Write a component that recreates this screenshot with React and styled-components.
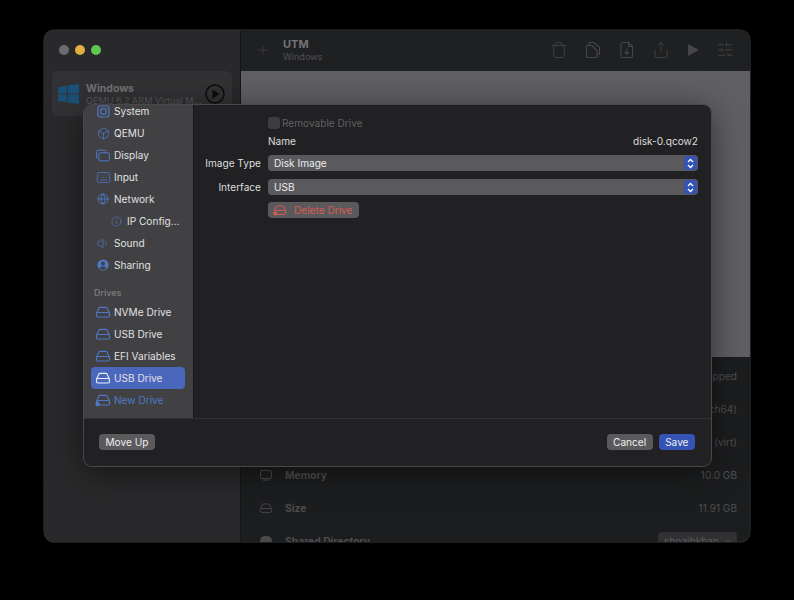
import styled, { createGlobalStyle } from 'styled-components'
import { Box, Keyboard, Globe, Info, Volume1, Plus, Trash, Share, SlidersHorizontal, ChevronDown } from 'lucide-react'

const GlobalStyle = createGlobalStyle`
  html, body {
    margin: 0;
    background: #000;
    font-family: Inter, "Liberation Sans", sans-serif;
    -webkit-font-smoothing: antialiased;
  }
`

const Page = styled.div`
  width: 794px;
  height: 600px;
  padding: 30px 44px 58px;
  box-sizing: border-box;
  overflow: hidden;
`

const Window = styled.div`
  position: relative;
  display: flex;
  width: 706px;
  height: 512px;
  border-radius: 10px;
  overflow: hidden;
  background: #1c1d1e;
  box-shadow: 0 0 0 0.5px #3c3c3e;
`

const Sidebar = styled.div`
  flex: 0 0 197px;
  display: flex;
  flex-direction: column;
  background: #29292b;
  border-right: 1px solid #161617;
  box-sizing: border-box;
  padding: 0 8px;
`

const Lights = styled.div`
  display: flex;
  gap: 6px;
  height: 41px;
  align-items: center;
  padding: 0 0 1px 7px;
  box-sizing: border-box;
`

const Light = styled.span`
  width: 10px;
  height: 10px;
  border-radius: 50%;
  background: ${p => p.$color};
`

const VmCard = styled.div`
  display: flex;
  align-items: center;
  width: 180px;
  height: 45px;
  padding: 0 7px 0 6px;
  box-sizing: border-box;
  gap: 7px;
  border-radius: 5px;
  background: #323234;
`

const VmText = styled.div`
  flex: 1;
  min-width: 0;
  margin-top: 1px;
`

const VmName = styled.div`
  font-size: 10.5px;
  font-weight: 700;
  line-height: 13px;
  color: #737375;
`

const VmSub = styled.div`
  font-size: 9.1px;
  line-height: 12px;
  color: #58585a;
  white-space: nowrap;
`

const PlayCircle = styled.svg`
  flex: none;
`

const Main = styled.div`
  flex: 1;
  display: flex;
  flex-direction: column;
  min-width: 0;
`

const Toolbar = styled.div`
  flex: 0 0 41px;
  display: flex;
  align-items: center;
  background: #1f2021;
  padding: 0 16px 1px 15px;
  box-sizing: border-box;
  color: #464648;
`

const TitleBlock = styled.div`
  margin-left: 13px;
  flex: 1;
`

const Title = styled.div`
  font-size: 11px;
  font-weight: 700;
  line-height: 13px;
  color: #737375;
`

const Subtitle = styled.div`
  font-size: 9px;
  line-height: 11px;
  color: #515153;
`

const ToolIcons = styled.div`
  display: flex;
  align-items: center;
  gap: 16px;
`

const Preview = styled.div`
  flex: 0 0 286px;
  background: #5f5f64;
`

const Details = styled.div`
  flex: 1;
  padding: 2px 13px 0 18px;
  overflow: hidden;
`

const DetailRow = styled.div`
  display: flex;
  align-items: center;
  height: 33px;
  flex: none;
`

const DetailIcon = styled.span`
  display: flex;
  width: 26px;
  color: #4a4a4c;
`

const DetailLabel = styled.span`
  flex: 1;
  font-size: 10.3px;
  font-weight: 700;
  color: #4d4d4f;
`

const DetailValue = styled.span`
  font-size: 10.1px;
  color: #4f4f51;
`

const SharePopup = styled.span`
  display: flex;
  align-items: center;
  justify-content: space-between;
  width: 79px;
  height: 18px;
  padding: 0 4px 0 6px;
  box-sizing: border-box;
  border-radius: 4px;
  background: #313133;
  font-size: 10.1px;
  color: #5c5c5e;
`

const Dialog = styled.div`
  position: absolute;
  left: 40px;
  top: 75px;
  width: 627px;
  height: 361px;
  display: flex;
  flex-direction: column;
  background: #212123;
  border-radius: 8px;
  overflow: hidden;
  box-shadow: 0 0 0 1px #48484a, 0 6px 34px rgba(0, 0, 0, 0.5);
`

const DialogBody = styled.div`
  flex: 0 0 314px;
  display: flex;
  border-bottom: 1px solid #313133;
  box-sizing: border-box;
`

const SideList = styled.div`
  flex: 0 0 110px;
  background: #414143;
  border-right: 1px solid #161617;
  box-sizing: border-box;
  padding: 0 8px 0 7px;
  overflow: hidden;
`

const ListScroll = styled.div`
  margin-top: -5px;
`

const SideItem = styled.div`
  display: flex;
  align-items: center;
  gap: 3px;
  height: 22px;
  padding-left: ${p => (p.$indent ? 17 : 4)}px;
  border-radius: 4px;
  font-size: 10.1px;
  white-space: nowrap;
  color: ${p => (p.$link ? '#4f78c8' : '#e0e0e2')};
  background: ${p => (p.$active ? '#4b67bd' : 'transparent')};
`

const IconSlot = styled.span`
  flex: none;
  display: flex;
  align-items: center;
  justify-content: center;
  width: 16px;
  color: ${p => (p.$active ? '#eef0f6' : '#4f78c8')};
`

const SectionHead = styled.div`
  font-size: 8.8px;
  font-weight: 600;
  line-height: 12px;
  color: #77777a;
  padding: 11px 0 2px 3px;
`

const Form = styled.div`
  flex: 1;
  display: grid;
  grid-template-columns: 55px 1fr;
  column-gap: 7px;
  align-content: start;
  padding: 0 13px 0 12px;
  font-size: 10.1px;
  color: #dcdcde;
`

const FieldLabel = styled.div`
  margin-top: ${p => p.$top}px;
  height: 16px;
  line-height: 17px;
  text-align: right;
  white-space: nowrap;
  justify-self: end;
`

const FieldValue = styled.div`
  grid-column: 2;
  margin-top: ${p => p.$top}px;
  height: 16px;
  line-height: 17px;
  display: flex;
  justify-content: space-between;
`

const CheckRow = styled.label`
  grid-column: 2;
  margin-top: 10px;
  display: flex;
  align-items: center;
  gap: 2px;
  height: 16px;
  color: #606062;
`

const CheckBox = styled.span`
  width: 12px;
  height: 12px;
  border-radius: 3px;
  background: #3d3d3f;
`

const Select = styled.div`
  flex: 1;
  display: flex;
  align-items: center;
  justify-content: space-between;
  height: 16px;
  padding: 0 1px 0 6px;
  border-radius: 4px;
  background: #5a5a5c;
  color: #ececee;
`

const Stepper = styled.span`
  display: flex;
  align-items: center;
  justify-content: center;
  width: 13px;
  height: 14px;
  border-radius: 3px;
  background: #3553b5;
`

const DeleteButton = styled.div`
  display: flex;
  align-items: center;
  width: 91px;
  height: 16px;
  margin-top: 7px;
  grid-column: 2;
  gap: 7px;
  padding-left: 5px;
  box-sizing: border-box;
  border-radius: 4px;
  background: #5a5a5c;
  color: #d85a55;
`

const Footer = styled.div`
  flex: 1;
  display: flex;
  align-items: center;
  gap: 6px;
  padding: 0 16px 1px 15px;
`

const Button = styled.div`
  height: 16px;
  line-height: 16px;
  padding: 0 6.5px;
  border-radius: 4px;
  font-size: 10.1px;
  text-align: center;
  color: #eeeef0;
  background: ${p => (p.$primary ? '#3553b5' : '#5a5a5c')};
`

const Spacer = styled.div`
  flex: 1;
`

const DriveIcon = ({ size = 16, add }) => (
  <svg width={size} height={size} viewBox="0 0 16 16" fill="none" stroke="currentColor" strokeWidth="1.1">
    <path d="M1.6 9 L4 4 Q4.3 3.4 5 3.4 H11 Q11.7 3.4 12 4 L14.4 9" />
    <rect x="1.5" y="8.5" width="13" height="4.5" rx="1.4" />
    {add && <circle cx="2.6" cy="12" r="2.2" fill="currentColor" stroke="none" />}
  </svg>
)

const ChipIcon = () => (
  <svg width="13" height="13" viewBox="0 0 13 13" fill="none" stroke="currentColor" strokeWidth="1.2">
    <rect x="1" y="1" width="11" height="11" rx="2.4" />
    <rect x="3.8" y="3.8" width="5.4" height="5.4" rx="1.2" />
  </svg>
)

const DisplayIcon = () => (
  <svg width="14" height="13" viewBox="0 0 14 13" fill="none" stroke="currentColor" strokeWidth="1">
    <path d="M2.5 9.5 H1.8 Q0.6 9.5 0.6 8.3 V2.4 Q0.6 1.2 1.8 1.2 H9 Q10.2 1.2 10.2 2.4 V3.6" />
    <rect x="3" y="3.8" width="10.4" height="8" rx="1.2" />
  </svg>
)

const SharingIcon = () => (
  <svg width="12" height="12" viewBox="0 0 12 12">
    <circle cx="6" cy="6" r="5.6" fill="currentColor" />
    <circle cx="6" cy="4.5" r="2" fill="#414143" />
    <path d="M2.4 9.4 Q3.4 7.2 6 7.2 Q8.6 7.2 9.6 9.4 Q8 10.8 6 10.8 Q4 10.8 2.4 9.4 Z" fill="#414143" />
  </svg>
)

const MemoryIcon = () => (
  <svg width="14" height="14" viewBox="0 0 14 14" fill="none" stroke="currentColor" strokeWidth="1.1">
    <rect x="1.5" y="2.5" width="11" height="8" rx="1.6" />
    <path d="M3.5 12 H10.5" />
  </svg>
)

const FolderDriveIcon = () => (
  <svg width="14" height="14" viewBox="0 0 14 14" fill="currentColor">
    <path d="M1 12 V7 Q1 2 7 2 Q13 2 13 7 V12 Z" />
  </svg>
)

const WindowsLogo = () => (
  <svg width="21" height="20" viewBox="0 0 21 20" fill="#1b5078">
    <path d="M0 3 L8.8 1.7 V9.4 H0 Z" />
    <path d="M9.8 1.5 L21 0 V9.4 H9.8 Z" />
    <path d="M0 10.4 H8.8 V18.2 L0 17 Z" />
    <path d="M9.8 10.4 H21 V20 L9.8 18.4 Z" />
  </svg>
)

const CopyDocIcon = () => (
  <svg width="18" height="18" viewBox="0 0 18 18" fill="none" stroke="currentColor" strokeWidth="1.1">
    <path d="M5 4 V2.5 Q5 1.5 6 1.5 H10 L15.5 6.5 V12.5 Q15.5 13.5 14.5 13.5 H13" />
    <path d="M3.5 4.5 H8 L13 9.5 V15.5 Q13 16.5 12 16.5 H3.5 Q2.5 16.5 2.5 15.5 V5.5 Q2.5 4.5 3.5 4.5 Z" />
  </svg>
)

const DocDownIcon = () => (
  <svg width="18" height="18" viewBox="0 0 18 18" fill="none" stroke="currentColor" strokeWidth="1.1">
    <path d="M4.5 1.5 H10.5 L14.5 5.5 V15 Q14.5 16.5 13 16.5 H4.5 Q3 16.5 3 15 V3 Q3 1.5 4.5 1.5 Z" />
    <path d="M10.5 1.5 V5.5 H14.5 M8.7 7.5 V13 M6.5 11 L8.7 13.2 L11 11" />
  </svg>
)

const StepperGlyph = () => (
  <svg width="7" height="11" viewBox="0 0 7 11" fill="none" stroke="#fff" strokeWidth="1.3">
    <path d="M1 4 L3.5 1.5 L6 4 M1 7 L3.5 9.5 L6 7" />
  </svg>
)

const PlayGlyph = () => (
  <svg width="14" height="14" viewBox="0 0 14 14" fill="currentColor">
    <path d="M2 1 L13 7 L2 13 Z" />
  </svg>
)

const settings = [
  { name: 'System', icon: <ChipIcon /> },
  { name: 'QEMU', icon: <Box size={13} strokeWidth={1.5} /> },
  { name: 'Display', icon: <DisplayIcon /> },
  { name: 'Input', icon: <Keyboard size={15} strokeWidth={1.2} /> },
  { name: 'Network', icon: <Globe size={12} strokeWidth={1.8} /> },
  { name: 'IP Config...', icon: <Info size={11} strokeWidth={1.5} />, indent: true },
  { name: 'Sound', icon: <Volume1 size={13} strokeWidth={1.5} /> },
  { name: 'Sharing', icon: <SharingIcon /> },
]

const drives = [
  { name: 'NVMe Drive' },
  { name: 'USB Drive' },
  { name: 'EFI Variables' },
  { name: 'USB Drive', active: true },
]

const details = [
  { label: 'Status', value: 'Stopped', icon: <DriveIcon size={14} /> },
  { label: 'Architecture', value: 'ARM64 (aarch64)', icon: <DriveIcon size={14} /> },
  { label: 'Machine', value: '(virt)', icon: <DriveIcon size={14} /> },
  { label: 'Memory', value: '10.0 GB', icon: <MemoryIcon /> },
  { label: 'Size', value: '11.91 GB', icon: <DriveIcon size={14} /> },
]

export default function App() {
  return (
    <Page>
      <GlobalStyle />
      <Window>
        <Sidebar>
          <Lights>
            <Light $color="#6b6b6d" />
            <Light $color="#e2b040" />
            <Light $color="#5cc94e" />
          </Lights>
          <VmCard>
            <WindowsLogo />
            <VmText>
              <VmName>Windows</VmName>
              <VmSub>QEMU 6.2 ARM Virtual M...</VmSub>
            </VmText>
            <PlayCircle width="20" height="20" viewBox="0 0 20 20" fill="none">
              <circle cx="10" cy="10" r="9" stroke="#0c0c0d" strokeWidth="1.5" />
              <path d="M7.5 5.5 L14.5 10 L7.5 14.5 Z" fill="#0c0c0d" />
            </PlayCircle>
          </VmCard>
        </Sidebar>

        <Main>
          <Toolbar>
            <Plus size={14} strokeWidth={1.2} />
            <TitleBlock>
              <Title>UTM</Title>
              <Subtitle>Windows</Subtitle>
            </TitleBlock>
            <ToolIcons>
              <Trash size={18} strokeWidth={1.1} />
              <CopyDocIcon />
              <DocDownIcon />
              <Share size={18} strokeWidth={1.1} />
              <PlayGlyph />
              <SlidersHorizontal size={18} strokeWidth={1.1} />
            </ToolIcons>
          </Toolbar>
          <Preview />
          <Details>
            {details.map(row => (
              <DetailRow key={row.label}>
                <DetailIcon>{row.icon}</DetailIcon>
                <DetailLabel>{row.label}</DetailLabel>
                <DetailValue>{row.value}</DetailValue>
              </DetailRow>
            ))}
            <DetailRow>
              <DetailIcon><FolderDriveIcon /></DetailIcon>
              <DetailLabel>Shared Directory</DetailLabel>
              <SharePopup>shoaibkhan <ChevronDown size={10} /></SharePopup>
            </DetailRow>
          </Details>
        </Main>

        <Dialog>
          <DialogBody>
            <SideList>
              <ListScroll>
                {settings.map(item => (
                  <SideItem key={item.name} $indent={item.indent}>
                    <IconSlot>{item.icon}</IconSlot>
                    {item.name}
                  </SideItem>
                ))}
                <SectionHead>Drives</SectionHead>
                {drives.map((item, i) => (
                  <SideItem key={i} $active={item.active}>
                    <IconSlot $active={item.active}><DriveIcon /></IconSlot>
                    {item.name}
                  </SideItem>
                ))}
                <SideItem $link>
                  <IconSlot><DriveIcon add /></IconSlot>
                  New Drive
                </SideItem>
              </ListScroll>
            </SideList>
            <Form>
              <CheckRow><CheckBox /> Removable Drive</CheckRow>
              <FieldValue $top={2}>
                <span>Name</span>
                <span>disk-0.qcow2</span>
              </FieldValue>
              <FieldLabel $top={6}>Image Type</FieldLabel>
              <FieldValue $top={6}>
                <Select>Disk Image<Stepper><StepperGlyph /></Stepper></Select>
              </FieldValue>
              <FieldLabel $top={8}>Interface</FieldLabel>
              <FieldValue $top={8}>
                <Select>USB<Stepper><StepperGlyph /></Stepper></Select>
              </FieldValue>
              <DeleteButton><DriveIcon size={14} add />Delete Drive</DeleteButton>
            </Form>
          </DialogBody>
          <Footer>
            <Button>Move Up</Button>
            <Spacer />
            <Button>Cancel</Button>
            <Button $primary>Save</Button>
          </Footer>
        </Dialog>
      </Window>
    </Page>
  )
}
